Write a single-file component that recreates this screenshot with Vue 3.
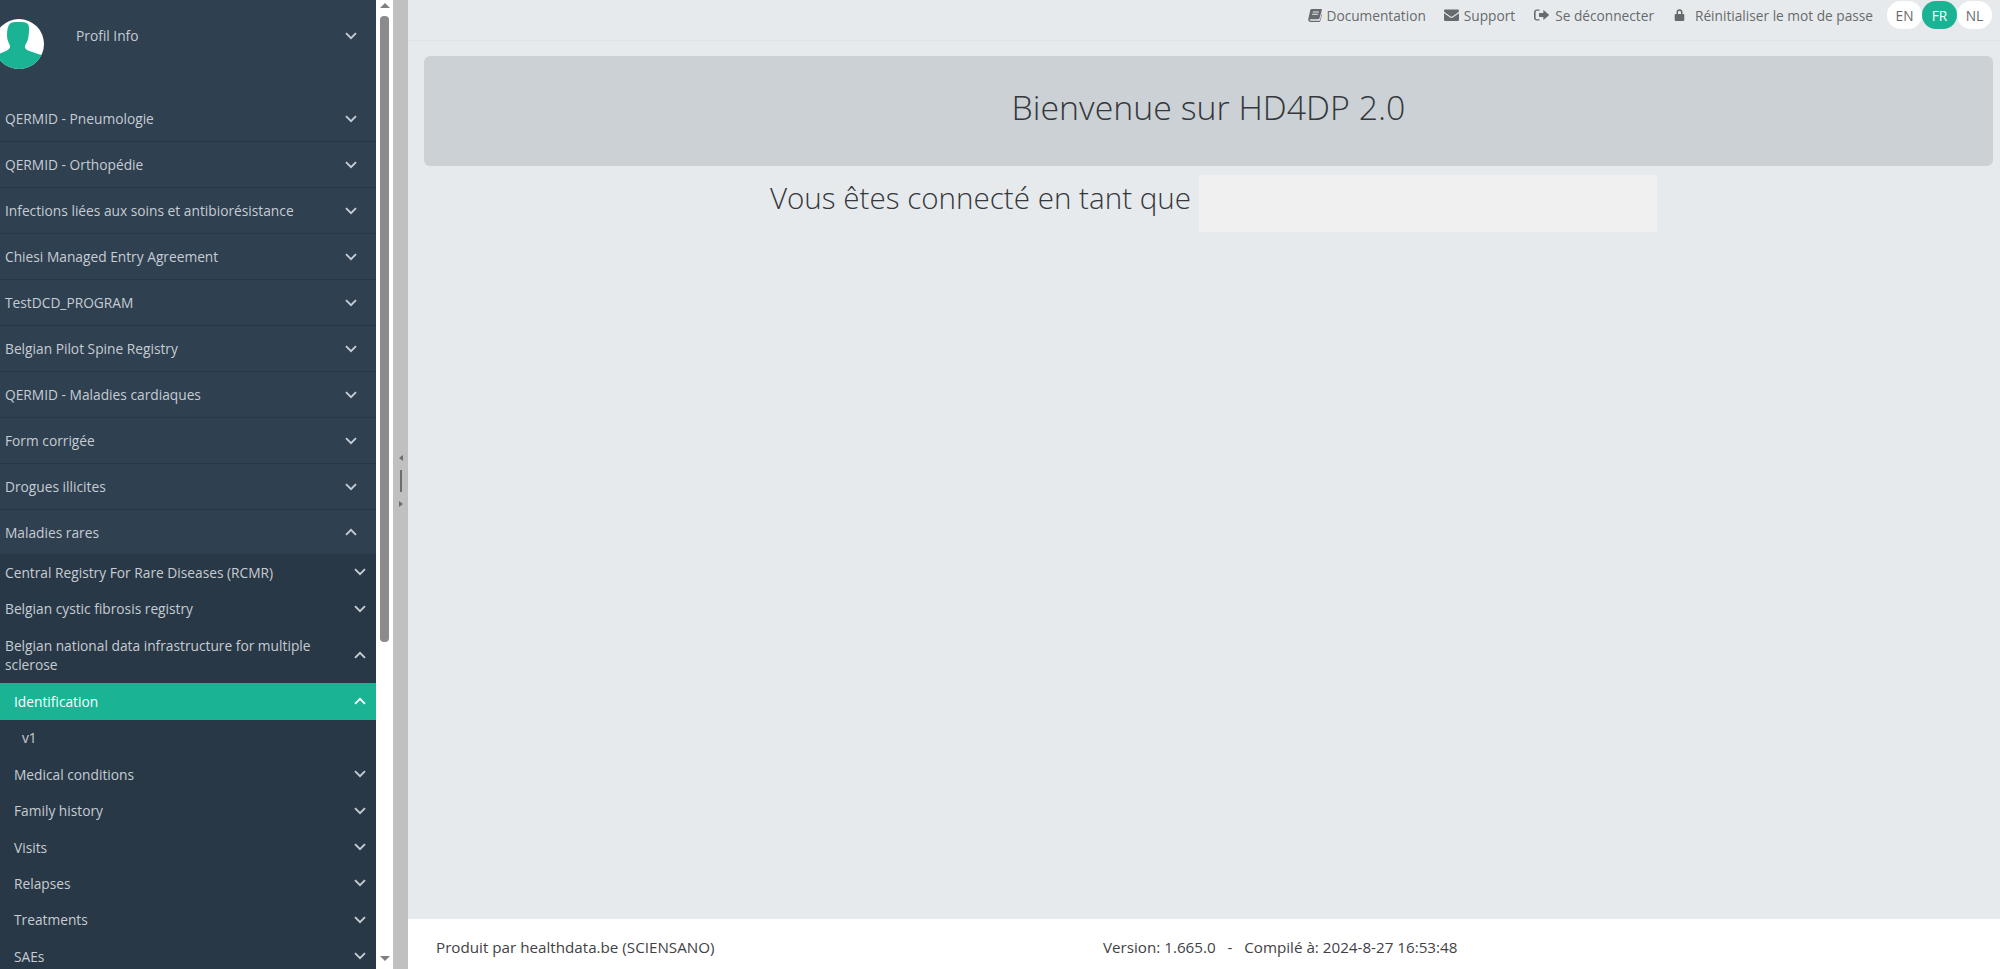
<script setup>
const programmes = [
  'QERMID - Pneumologie',
  'QERMID - Orthopédie',
  'Infections liées aux soins et antibiorésistance',
  'Chiesi Managed Entry Agreement',
  'TestDCD_PROGRAM',
  'Belgian Pilot Spine Registry',
  'QERMID - Maladies cardiaques',
  'Form corrigée',
  'Drogues illicites'
]
const registres = ['Central Registry For Rare Diseases (RCMR)', 'Belgian cystic fibrosis registry']
const sections = ['Medical conditions', 'Family history', 'Visits', 'Relapses', 'Treatments', 'SAEs']
</script>

<template>
  <div class="page">
    <aside class="sidebar">
      <nav class="nav">
        <div class="profil">
          <svg class="avatar" width="50" height="50" viewBox="0 0 50 50">
            <defs>
              <clipPath id="rond"><circle cx="25" cy="25" r="25" /></clipPath>
            </defs>
            <circle cx="25" cy="25" r="25" fill="#fff" />
            <g clip-path="url(#rond)">
              <path d="M15 6c1-2.500 4-3 9.500-3s9 .5 10 3c1 3 .5 10-.5 14-.7 3-2.500 5-3 7-.3 2 .5 3 3 4.500L50 37v16H-2V38l14-6c3-1.500 4.300-3 4-5-.4-2-2-4-2.600-7-.8-4-.4-11 1.600-14z" fill="#1ab394" />
            </g>
          </svg>
          <span class="profil-nom">Profil Info</span>
          <svg class="chevron" viewBox="0 0 12 8"><path d="M1 1.200l5 5 5-5" /></svg>
        </div>

        <div v-for="p in programmes" :key="p" class="row-prog">
          <span>{{ p }}</span>
          <svg class="chevron" viewBox="0 0 12 8"><path d="M1 1.200l5 5 5-5" /></svg>
        </div>

        <div class="row-prog ouvert">
          <span>Maladies rares</span>
          <svg class="chevron" viewBox="0 0 12 8"><path d="M1 6.800l5-5 5 5" /></svg>
        </div>

        <div class="second">
          <div v-for="r in registres" :key="r" class="row-sub">
            <span>{{ r }}</span>
            <svg class="chevron" viewBox="0 0 12 8"><path d="M1 1.200l5 5 5-5" /></svg>
          </div>
          <div class="row-sub deux-lignes">
            <span>Belgian national data infrastructure for multiple sclerose</span>
            <svg class="chevron" viewBox="0 0 12 8"><path d="M1 6.800l5-5 5 5" /></svg>
          </div>
          <div class="row-sub niveau3 actif">
            <span>Identification</span>
            <svg class="chevron" viewBox="0 0 12 8"><path d="M1 6.800l5-5 5 5" /></svg>
          </div>
          <div class="row-sub niveau4"><span>v1</span></div>
          <div v-for="s in sections" :key="s" class="row-sub niveau3">
            <span>{{ s }}</span>
            <svg class="chevron" viewBox="0 0 12 8"><path d="M1 1.200l5 5 5-5" /></svg>
          </div>
        </div>
      </nav>

      <div class="scrollbar">
        <div class="fleche-haut"></div>
        <div class="thumb"></div>
        <div class="piste"></div>
        <div class="fleche-bas"></div>
      </div>
    </aside>

    <div class="splitter">
      <div class="tri-gauche"></div>
      <div class="barre"></div>
      <div class="tri-droite"></div>
    </div>

    <main class="main">
      <header class="topbar">
        <a class="lien lien-doc">
          <svg class="ico" width="14" height="14" viewBox="0 0 14 14"><path d="M3.500 1h9.800c.5 0 .7.400.6.900L11.600 10c-.2.800-.7 1.200-1.500 1.200H2.500c-.6 0-.9.600-.7 1 .1.300.4.500.8.500h8.600c.4 0 .7-.2.800-.6l2-7c.3.200.4.500.3.900l-2 7c-.2.600-.7 1-1.300 1H2.300C1.200 14 .2 13 .2 11.800c0-.4 0-.6.200-1L2.300 2c.2-.6.600-1 1.200-1zM5 3.500l-.3 1h6l.3-1zM4.300 5.800l-.3 1h6l.3-1z" fill-rule="evenodd" /></svg>
          Documentation
        </a>
        <a class="lien">
          <svg class="ico" width="15" height="14" viewBox="0 0 15 14"><path d="M1.200 1.500h12.600c.7 0 1.200.5 1.200 1.200 0 .7-.4 1.300-1 1.700L8.300 8.500c-.5.300-1.100.3-1.600 0L1 4.400C.4 4 0 3.400 0 2.700c0-.7.500-1.200 1.200-1.200zM0 5.200l6.200 4.300c.8.500 1.800.5 2.600 0L15 5.200v6.600c0 .7-.5 1.200-1.200 1.200H1.200C.5 13 0 12.500 0 11.800z" /></svg>
          Support
        </a>
        <a class="lien lien-sortie">
          <svg class="ico" width="15" height="14" viewBox="0 0 15 14"><path d="M5.500 1.500v1.300H2.800c-.7 0-1.200.5-1.200 1.200v6c0 .7.500 1.200 1.200 1.200h2.700v1.300H2.800C1.200 12.500 0 11.300 0 9.800V4.200C0 2.700 1.200 1.500 2.800 1.500zM9.300 2.700c0-.4.400-.6.700-.3l4.700 4.200c.3.200.3.600 0 .8L10 11.600c-.3.300-.7.100-.7-.3V9H5.500c-.3 0-.5-.2-.5-.5v-3c0-.3.200-.5.500-.5h3.800z" /></svg>
          Se déconnecter
        </a>
        <a class="lien lien-mdp">
          <svg class="ico" width="13" height="14" viewBox="0 0 13 14"><path d="M3.500 6V4.200a3 3 0 0 1 6 0V6h.9c.5 0 .9.400.9.900v5.200c0 .5-.4.900-.9.900H2.600c-.5 0-.9-.4-.9-.9V6.900c0-.5.400-.9.900-.9zm1.500 0h3V4.200a1.500 1.500 0 0 0-3 0z" fill-rule="evenodd" /></svg>
          Réinitialiser le mot de passe
        </a>
        <div class="langues">
          <span class="langue">EN</span>
          <span class="langue active">FR</span>
          <span class="langue">NL</span>
        </div>
      </header>

      <section class="contenu">
        <div class="jumbotron">
          <h1>Bienvenue sur HD4DP 2.0</h1>
        </div>
        <div class="connecte">
          <span class="connecte-texte">Vous êtes connecté en tant que</span>
          <div class="masque"></div>
        </div>
      </section>

      <footer class="footer">
        <span class="produit">Produit par healthdata.be (SCIENSANO)</span>
        <span class="version">Version: 1.665.0 &nbsp;&nbsp;-&nbsp;&nbsp; Compilé à: 2024-8-27 16:53:48</span>
      </footer>
    </main>
  </div>
</template>

<style>
html, body {
  margin: 0;
  overflow: hidden;
}
</style>

<style scoped>
.page {
  display: flex;
  width: 2000px;
  height: 969px;
  overflow: hidden;
  font-family: "Open Sans", "Liberation Sans", sans-serif;
  font-size: 13.750px;
  color: #676a6c;
  background: #e7eaec;
}

.sidebar {
  display: flex;
  flex: none;
  width: 393px;
  background: #fff;
}
.nav {
  width: 376px;
  height: 969px;
  overflow: hidden;
  background: #2f4050;
  color: #c6ccd3;
}

.profil {
  display: flex;
  align-items: flex-start;
  box-sizing: border-box;
  height: 96px;
  padding-right: 19px;
}
.avatar {
  flex: none;
  margin: 19px 0 0 -6px;
}
.profil-nom {
  flex: 1;
  margin: 26px 0 0 32px;
}
.profil .chevron {
  margin-top: 32px;
}

.chevron {
  flex: none;
  width: 12px;
  height: 8px;
  fill: none;
  stroke: #c6ccd3;
  stroke-width: 1.900;
}

.row-prog {
  display: flex;
  align-items: center;
  justify-content: space-between;
  box-sizing: border-box;
  height: 46px;
  padding: 0 19px 0 5px;
  border-bottom: 1px solid #293846;
}
.row-prog.ouvert {
  height: 44px;
  border-bottom: none;
}

.second {
  background: #293846;
}
.row-sub {
  display: flex;
  align-items: center;
  justify-content: space-between;
  box-sizing: border-box;
  height: 36.400px;
  padding: 0 10.500px 0 5px;
  line-height: 19px;
}
.row-sub span {
  max-width: 325px;
}
.deux-lignes {
  height: 56.500px;
}
.niveau3 {
  padding-left: 14px;
}
.niveau4 {
  padding-left: 22px;
}
.actif {
  background: #1ab394;
  color: #fff;
}
.actif .chevron {
  stroke: #fff;
}

.scrollbar {
  display: flex;
  flex-direction: column;
  align-items: center;
  width: 17px;
  height: 969px;
  box-sizing: border-box;
  padding: 3px 0 8px;
}
.fleche-haut {
  width: 0;
  height: 0;
  border-left: 5px solid transparent;
  border-right: 5px solid transparent;
  border-bottom: 5px solid #7f7f7f;
}
.fleche-bas {
  width: 0;
  height: 0;
  border-left: 5px solid transparent;
  border-right: 5px solid transparent;
  border-top: 5px solid #7f7f7f;
}
.thumb {
  flex: none;
  width: 9px;
  height: 626px;
  margin-top: 8px;
  border-radius: 4px;
  background: #8b8b8b;
}
.piste {
  flex: 1;
}

.splitter {
  display: flex;
  flex: none;
  flex-direction: column;
  align-items: center;
  justify-content: center;
  gap: 9px;
  width: 15px;
  height: 969px;
  padding-bottom: 7px;
  box-sizing: border-box;
  background: #c0c0c0;
}
.tri-gauche {
  width: 0;
  height: 0;
  border-top: 3px solid transparent;
  border-bottom: 3px solid transparent;
  border-right: 4px solid #6d6d6d;
}
.tri-droite {
  width: 0;
  height: 0;
  border-top: 3px solid transparent;
  border-bottom: 3px solid transparent;
  border-left: 4px solid #6d6d6d;
}
.barre {
  width: 2px;
  height: 22px;
  background: #6d6d6d;
}

.main {
  display: flex;
  flex: 1;
  flex-direction: column;
  min-width: 0;
}

.topbar {
  display: flex;
  align-items: center;
  justify-content: flex-end;
  box-sizing: border-box;
  height: 41px;
  padding: 0 8px 10px 0;
  border-bottom: 1px solid #dfe3e6;
  font-size: 13.700px;
}
.lien {
  display: flex;
  align-items: center;
  gap: 5px;
  margin-right: 19px;
  color: #676a6c;
}
.lien-doc {
  margin-right: 18px;
}
.lien-sortie {
  gap: 6px;
}
.lien-mdp {
  gap: 9px;
  margin-right: 14px;
}
.ico {
  fill: #676a6c;
}
.langues {
  display: flex;
}
.langue {
  display: flex;
  align-items: center;
  justify-content: center;
  width: 35px;
  height: 28px;
  border-radius: 14px;
  background: #fff;
}
.langue.active {
  background: #1ab394;
  color: #fff;
}

.contenu {
  flex: 1;
  padding: 15px 7px 0 16px;
}
.jumbotron {
  display: flex;
  align-items: center;
  justify-content: center;
  box-sizing: border-box;
  height: 110px;
  padding-bottom: 9px;
  border-radius: 6px;
  background: #ccd1d5;
}
h1 {
  margin: 0;
  font-size: 33.900px;
  font-weight: 300;
  color: #34383c;
}
.connecte {
  display: flex;
  justify-content: center;
  margin-top: 9px;
  padding-left: 10px;
}
.connecte-texte {
  margin-top: 4px;
  font-size: 29.600px;
  font-weight: 300;
  line-height: 38px;
  color: #34383c;
}
.masque {
  width: 458px;
  height: 57px;
  margin-left: 8px;
  background: #f0f0f0;
}

.footer {
  display: flex;
  align-items: center;
  box-sizing: border-box;
  height: 50px;
  padding: 5px 0 0 28px;
  background: #fff;
  color: #3f4245;
  font-size: 15.200px;
}
.produit {
  width: 667px;
}
</style>
